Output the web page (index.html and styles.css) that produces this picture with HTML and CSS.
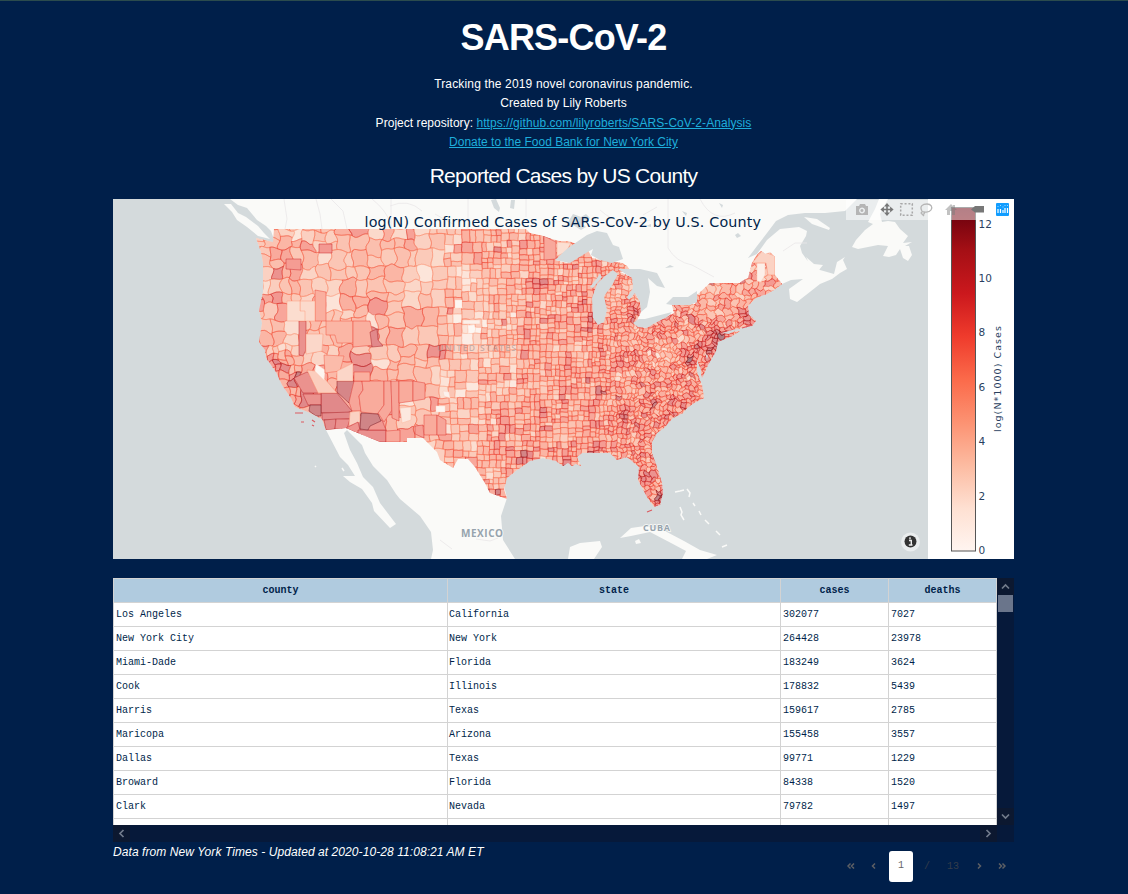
FILE: index.html
```html
<!DOCTYPE html>
<html lang="en">
<head>
<meta charset="utf-8">
<title>SARS-CoV-2</title>
<link rel="stylesheet" href="styles.css">
</head>
<body>
<main class="page">
  <header class="intro">
    <h1>SARS-CoV-2</h1>
    <p class="tagline">Tracking the 2019 novel coronavirus pandemic.</p>
    <p class="author">Created by Lily Roberts</p>
    <p class="repo">Project repository: <a href="#">https://github.com/lilyroberts/SARS-CoV-2-Analysis</a></p>
    <p class="donate"><a href="#">Donate to the Food Bank for New York City</a></p>
    <h2>Reported Cases by US County</h2>
  </header>

  <section class="chart">
    <svg class="map" width="901" height="360" viewBox="113 199 901 360">
      <defs>
        <clipPath id="mapArea"><rect x="113" y="199" width="815" height="360"/></clipPath>
        <path id="outline" d="M274 229H526L530 233 543 236 552 239 559 241 568 241 577 244 566 254 555 260 567 263 588 250 592 258 612 262 622 263 627 266 630 270 620 272 633 278 634 288 628 298 635 293 640 302 641 312 636 322 645 328 660 320 674 313 672 305 695 304 697 295 710 283H740L742 281 748 278 752 263 756 256 761 251 765 254 770 252 775 257V275L782 284 774 290 767 294 756 298 748 306 749 315 756 321 752 326 742 328 725 333 740 331 732 336 718 342 716 351 708 365 702 378 700 370 697 360 697 372 702 385 704 398 694 403 687 408 683 413 673 418 664 428 657 433 652 442V453L657 467 662 483 663 493 660 505 654 507 647 497 638 480 639 467 627 457 617 460 610 453H582L577 457 581 466 576 464 572 466 568 463 563 466 556 461 543 458 530 461 517 470 507 478 504 489 507 499 490 493 485 483 475 467 468 459H458L453 468 440 460 437 452 423 438H407V442H380L346 428 326 430 322 419 308 412 295 407 291 398 282 385 276 372 266 358 265 350 259 342 262 323 259 310 263 292 263 263 261 252 256 238 273 242Z"/>
        <clipPath id="us"><use href="#outline"/></clipPath>
        <linearGradient id="reds" x1="0" y1="1" x2="0" y2="0">
          <stop offset="0" stop-color="#fff5f0"/><stop offset=".125" stop-color="#fee0d2"/><stop offset=".25" stop-color="#fcbba1"/><stop offset=".375" stop-color="#fc9272"/><stop offset=".5" stop-color="#fb6a4a"/><stop offset=".625" stop-color="#ef3b2c"/><stop offset=".75" stop-color="#cb181d"/><stop offset=".875" stop-color="#a50f15"/><stop offset="1" stop-color="#67000d"/>
        </linearGradient>
      </defs>
      <g clip-path="url(#mapArea)">
        <rect class="sea" x="113" y="199" width="815" height="360"/>
        <g class="land">
          <use href="#outline"/>
          <path d="M230 199L238 205 247 208 257 220 266 226 271 231 276 245 400 330 640 330 740 290 782 284 791 280 803 279 789 289 790 299 797 302 806 295 820 284 832 279 840 273 847 269 843 260 845 257 837 262 834 274 820 270 807 260 802 253 800 246 806 236 807 231 799 227 780 229 767 240 757 254 748 258 757 246 767 233 776 221 788 215 805 213 825 213 845 211 857 199Z"/>
          <path d="M224 204L231 204 238 213 246 217 258 226 264 233 270 239 258 236 247 227 237 220 232 212Z"/>
          <path d="M873 224L865 230 856 240 852 247 858 249 878 245 888 246 883 256 889 257 896 255 900 249 903 258 908 261 912 255 909 246 905 246 912 242 903 243 908 236 900 229 895 222 888 221 882 222 880 214 888 199H879L875 209 868 222Z"/>
          <path d="M804 217L817 219 830 228 829 230 812 224Z"/>
          <path d="M806 257l8 7 9 1-4 5-8-3z"/>
          <path d="M326 430L340 457 348 465 355 476 343 476 350 482 362 489 372 503 374 511 390 528 396 524 380 503 373 487 363 477 357 463 350 450 344 433 347 430 362 445 365 453 373 466 387 480 396 494 400 499 420 516 431 532 433 550 431 559H515L503 540 501 516 507 498 500 470 440 420 360 420Z"/>
          <path d="M568 559L570 547 580 543 600 541 602 547 594 559ZM620 538L631 528 645 526 665 531 684 541 700 550 717 555 707 559H682L686 551 671 543 650 532 631 536ZM635 541l4-2 2 4-5 1z"/>
          <path class="islands" d="M675 492l5-1 4-1M687 489l3 4-1 4M680 507l2 5-1 3 3 5M693 503l2 3M699 511l2 4M705 520l4 4M716 531l4 4M722 547l5-2M315 466l1 1M342 468l2 3"/>
        </g>
        <g class="rivers"><path d="M284 199l3 20-2 10M316 199l4 15 2 15M331 199l12 12 4 18M391 199v30M468 199v30M526 199v18M668 199v49q8 14 24 17l22 12M372 199q15 12 18 24M600 210q22 20 50 10M700 199q13 25 35 14M435 214l18 10M390 206q18-8 32 5M643 215l14-8M783 251l12-8 12 0M476 539l14 2 8-3M440 540l12 9"/></g>
        <g class="water"><path d="M491 200l5-1 4 9-1 4-5-4zM511 200h4l-1 9-4-1zM573 214l8 3 5-3 4 4-7 6 3 3-5 3-8-5-6 2 1-5zM735 235l3-2 3 3-4 2zM656 242l4 2M625 205l5 1M719 203l3 5 1-3zM682 211l4 5 1-3zM646 226l5-2v3z"/></g>
        <g id="counties" clip-path="url(#us)"></g>
        <g clip-path="url(#us)"><g id="named"></g></g>
        <g class="channel-isles"><path d="M295 413h8M301 422h3M312 420l3 2M312 425l2 1M654 506l4-1M647 512l5-2M742 328l10-3"/></g>
        <g class="water">
          <path d="M555 260L568 248 587 235 597 231 607 233 613 245 619 247 623 259 612 263 600 260 591 255 593 249 586 253 570 263ZM613 270L605 276 597 284 592 298 593 318 598 325 604 322 607 310 604 296 611 287 618 274ZM618 269L640 269 657 273 665 288 657 286 648 278 650 292 647 307 641 312 640 302 635 293 629 300 627 297 633 288 632 278ZM633 323L639 319 645 319 672 312 667 317 655 323 647 328 638 327ZM666 304L673 297 688 297 697 291 697 302 690 305 672 305Z"/>
          <path d="M697 360l4 10v12l-4-15zM722 333l17-5-10 6zM665 268l5-3 4 2M705 353l3 3-1 3zM590 287l10-13 2 3-9 11z"/>
        </g>
        <g class="map-labels">
          <text class="faint" x="437" y="351" textLength="79" lengthAdjust="spacing">UNITED STATES</text>
          <text class="mx" x="461" y="537" textLength="42">MEXICO</text>
          <text class="cu" x="643" y="531" textLength="27">CUBA</text>
        </g>
        <circle cx="910.5" cy="542" r="9.5" fill="#fff" fill-opacity=".5"/>
        <circle cx="910.5" cy="541.5" r="6" fill="#333"/>
        <path d="M909 540.5h2.3v4M908.800 545h3.700M910 537.300v2" fill="none" stroke="#eee" stroke-width="1.4"/>
      </g>
      <text class="chart-title" x="364.500" y="227" textLength="396.500">log(N) Confirmed Cases of SARS-CoV-2 by U.S. County</text>
      <rect x="951.5" y="207.500" width="24" height="343.500" fill="url(#reds)" stroke="#555"/>
      <g class="ticks">
        <text x="978.500" y="554">0</text><text x="978.500" y="500">2</text><text x="978.500" y="445">4</text><text x="978.500" y="391">6</text><text x="978.500" y="336">8</text><text x="978.500" y="282">10</text><text x="978.500" y="227.500">12</text>
        <text class="bar-title" transform="translate(1001 432) rotate(-90)" textLength="106">log(N*1000) Cases</text>
      </g>
      <rect x="846" y="200" width="168" height="20" fill="#fff" fill-opacity=".5"/>
      <g class="tools">
        <path fill-rule="evenodd" d="M856 206h3l1-2h5l1 2h2v9h-12zM862 207.500a3 3 0 1 0 .1 0zM862 209a1.500 1.500 0 1 1-.1 0z"/>
        <path class="active" d="M887 203l3 3.500h-2.200v2.300h2.300v-2.300l3.500 3-3.500 3v-2.200h-2.300v2.300h2.200l-3 3.500-3-3.500h2.200v-2.300h-2.300v2.200l-3.500-3 3.500-3v2.300h2.300v-2.300h-2.200z"/>
        <rect x="900.700" y="203.700" width="11.600" height="11.600" fill="none" stroke="#a8a8a8" stroke-width="1.500" stroke-dasharray="2 1.860"/>
        <path d="M922 211c-3-5 1-7 5-7s6 3 4 6-5 2-7 2c-2-1-4 1-2 2s3-1 2-2M922 214l2 2" fill="none" stroke="#b5b5b5" stroke-width="1.300"/>
        <path class="home" d="M945 210l6-6 2 2v-1h2v3l2 2h-2v5h-3v-4h-2v4h-3v-5z"/>
        <path class="tag" d="M971 209.500l4-3.500h9v6.500h-9z"/>
        <rect x="996" y="203" width="13" height="13" rx="1" fill="#119dff"/>
        <path d="M998 209v4M1000.500 209v4M1003 210v3M1005 208v5M1007.500 208v5" stroke="#fff" stroke-width="1.200"/>
        <path d="M997.500 206.500h1M1000 205.500h1M1002.500 207h1M1004.500 205.500h1M1007 205.500h1" stroke="#fff" stroke-opacity=".6"/>
      </g>
    </svg>
  </section>

  <section class="table-box">
    <div class="table-view">
      <div class="row head"><span>county</span><span>state</span><span>cases</span><span>deaths</span></div>
      <div class="row"><span>Los Angeles</span><span>California</span><span>302077</span><span>7027</span></div>
      <div class="row"><span>New York City</span><span>New York</span><span>264428</span><span>23978</span></div>
      <div class="row"><span>Miami-Dade</span><span>Florida</span><span>183249</span><span>3624</span></div>
      <div class="row"><span>Cook</span><span>Illinois</span><span>178832</span><span>5439</span></div>
      <div class="row"><span>Harris</span><span>Texas</span><span>159617</span><span>2785</span></div>
      <div class="row"><span>Maricopa</span><span>Arizona</span><span>155458</span><span>3557</span></div>
      <div class="row"><span>Dallas</span><span>Texas</span><span>99771</span><span>1229</span></div>
      <div class="row"><span>Broward</span><span>Florida</span><span>84338</span><span>1520</span></div>
      <div class="row"><span>Clark</span><span>Nevada</span><span>79782</span><span>1497</span></div>
      <div class="row"><span></span><span></span><span></span><span></span></div>
    </div>
    <div class="vbar">
      <svg width="17" height="17"><path d="M5 10.500l3.500-3.500 3.500 3.500"/></svg>
      <div class="thumb"></div>
      <svg class="end" width="17" height="17"><path d="M5 6.500l3.500 3.500 3.500-3.500"/></svg>
    </div>
    <div class="hbar">
      <svg width="17" height="17"><path d="M10.500 5l-3.500 3.500 3.500 3.500"/></svg>
      <svg width="17" height="17"><path d="M6.500 5l3.500 3.500-3.500 3.500"/></svg>
    </div>
    <div class="corner"></div>
  </section>

  <footer class="foot">
    <em>Data from New York Times - Updated at 2020-10-28 11:08:21 AM ET</em>
    <nav class="pager">
      <svg width="8" height="8"><path d="M3.500 1.500l-2.500 2.500 2.500 2.500M7 1.500l-2.500 2.500 2.500 2.500"/></svg>
      <svg class="prev" width="5" height="8"><path d="M4 1.500l-2.500 2.500 2.500 2.500"/></svg>
      <span class="current">1</span>
      <span class="slash">/</span>
      <span class="total">13</span>
      <svg class="next" width="5" height="8"><path d="M1 1.500l2.500 2.500-2.500 2.500"/></svg>
      <svg width="8" height="8"><path d="M1 1.500l2.500 2.500-2.500 2.500M4.500 1.500l2.500 2.500-2.500 2.500"/></svg>
    </nav>
  </footer>
</main>
<script src="map.js"></script>
</body>
</html>
```
FILE: styles.css
```css
* { box-sizing: border-box; }
body { margin: 0; background: #001f4a; color: #fff; font: 12px/19.3px "Liberation Sans", Arial, sans-serif; border-top: 1px solid #2b4b4d; height: 894px; overflow: hidden; }
.page { width: 901px; margin-left: 113px; }
.intro { height: 198px; text-align: center; }
h1 { margin: 0; padding-top: 14px; height: 74px; font-size: 36px; line-height: 46px; letter-spacing: -.8px; }
p { margin: 0; height: 19.4px; }
.tagline { letter-spacing: .155px; }
.author { letter-spacing: .05px; }
.repo { letter-spacing: .04px; }
.repo a { letter-spacing: .07px; }
a { color: #1eaedb; }
h2 { margin: 0; padding-top: 10px; font-size: 21px; line-height: 26px; font-weight: 400; letter-spacing: -.72px; }
.chart { height: 360px; background: #fff; }
.map { display: block; }
.sea, .water { fill: #d4dadc; }
.land { fill: #fafaf8; }
.land .islands { fill: none; stroke: #fafaf8; stroke-width: 1.5; }
.rivers { fill: none; stroke: #eae7e8; stroke-width: .8; }
.channel-isles { fill: none; stroke: #dc5a60; stroke-width: 1.2; }
.map-labels { font: bold 10px "Open Sans", sans-serif; fill: #96a3ad; stroke: #fafaf8; stroke-width: 1.5px; paint-order: stroke; }
.map-labels .faint { font-size: 8.5px; font-weight: 600; fill: #9b8d8d; fill-opacity: .55; stroke: none; }
.map-labels .cu { font-size: 9px; }
.chart-title { font: 14.3px "DejaVu Sans", sans-serif; fill: #001f4a; font-variant-ligatures: none; }
.ticks { font: 10.5px "DejaVu Sans", sans-serif; fill: #2a3f5f; }
.ticks .bar-title { font-size: 9.5px; }
.tools { fill: #b5b5b5; }
.tools .active { fill: #777; }
.tools .home { fill: #777; fill-opacity: .45; }
.tools .tag { fill: #777; }
.table-box { margin-top: 19px; display: grid; grid-template-columns: 884px 17px; grid-template-rows: 247px 17px; font-family: "Liberation Mono", "Courier New", monospace; font-size: 10px; }
.table-view { overflow: hidden; background: #fff; color: #001f4a; }
.row { display: grid; grid-template-columns: 334px 333px 108px 109px; height: 24px; }
.row span { border-top: 1px solid #d3d3d3; border-left: 1px solid #d3d3d3; padding-left: 2px; line-height: 23px; }
.row span:nth-child(2) { padding-left: 1px; }
.row span:last-child { border-right: 1px solid #d3d3d3; }
.row.head span { background: #b0cbdf; text-align: center; font-weight: bold; padding: 0; }
.vbar { display: flex; flex-direction: column; background: #06193a; }
.vbar .end { margin-top: auto; }
.thumb { width: 15px; height: 17px; margin-left: 1px; background: #6a758b; }
.hbar { display: flex; justify-content: space-between; background: #06193a; }
.corner { background: #06193a; }
.vbar svg, .hbar svg { fill: none; stroke: #727b8b; stroke-width: 1.7; background: #0c1830; }
.foot { display: flex; justify-content: space-between; }
.foot em { padding-top: 1px; letter-spacing: .075px; }
.pager { display: flex; align-items: center; height: 32px; margin: 8px 8px 0 0; font: 10px "Liberation Mono", monospace; color: #343d4b; }
.pager svg { fill: none; stroke: #5d6065; stroke-width: 1.5; }
.prev { margin-left: 16px; }
.current { width: 24px; height: 31px; margin-left: 13px; border-radius: 3px; background: #fff; color: #666; line-height: 30px; text-align: center; }
.slash { margin-left: 11px; }
.total { margin-left: 17px; }
.next { margin: 0 16px 0 18px; }
```
FILE: map.js
```javascript
const NS = "http://www.w3.org/2000/svg";
const REDS = ["fff5f0", "fee0d2", "fcbba1", "fc9272", "fb6a4a", "ef3b2c", "cb181d", "a50f15", "67000d"]
  .map(h => [0, 2, 4].map(i => parseInt(h.substr(i, 2), 16)));

// Colour for a value between 0 and 12.
function red(v) {
  const t = Math.max(0, Math.min(7.999, v / 12.6 * 8)), i = Math.floor(t), f = t - i;
  return "rgb(" + REDS[i].map((c, k) => Math.round(c + (REDS[i + 1][k] - c) * f)).join() + ")";
}

let seed = 77;
function rnd() {
  seed = (seed * 1664525 + 1013904223) % 4294967296;
  return seed / 4294967296;
}

function cellSize(x, y) {
  if (x < 300) return y > 345 ? 8 : 13;
  if (x < 400) return y > 370 ? 18 : 15;
  if (x < 440) return 15;
  if (x < 480) return 10;
  if (x < 530) return y > 440 ? 7 : 7.6;
  if (x < 600) return 6.3;
  return y < 320 && x > 690 ? 7.5 : 5.3;
}

// Split the map into rectangles until each is about one county in size.
const cells = [];
function split(x, y, w, h) {
  const s = cellSize(x + w / 2, y + h / 2);
  if (w <= s * 1.3 && h <= s * 1.3) {
    cells.push([x, y, w, h]);
    return;
  }
  const k = .36 + rnd() * .28;
  if (w > h) { split(x, y, w * k, h); split(x + w * k, y, w * (1 - k), h); }
  else { split(x, y, w, h * k); split(x, y + h * k, w, h * (1 - k)); }
}
split(235, 210, 305, 310);
split(540, 210, 260, 310);

// Borders wander in the mountains and the east, and stay straight on the plains.
function warp([x, y]) {
  const west = Math.max(0, Math.min(1, (455 - x) / 40)), east = Math.max(0, Math.min(1, (x - 590) / 60));
  const a = .2 + west * 1.05 + east * .9, k = west ? .19 : .42;
  return [
    x + a * (Math.sin(y * k + x * .07) + .8 * Math.sin(y * k * 2.3 + x * .19 + 2) + .5 * Math.sin(x * .31 + 1)),
    y + a * (Math.sin(x * k + y * .09 + 1) + .8 * Math.sin(x * k * 2.1 - y * .17) + .5 * Math.sin(y * .37))
  ];
}

const HOT = [[288, 249, 9, 3], [291, 253, 6, 2], [277, 276, 7, 2], [275, 283, 5, 2], [280, 368, 13, 3.2], [297, 381, 12, 3], [375, 336, 6, 4],
  [302, 267, 9, 2], [437, 350, 8, 3.5], [592, 324, 8, 4], [541, 284, 5, 4], [634, 314, 7, 3], [569, 359, 4, 3], [719, 336, 9, 4.5],
  [745, 318, 9, 3.5], [691, 357, 9, 3.5], [707, 348, 11, 3], [526, 458, 6, 4], [508, 424, 6, 4], [502, 447, 7, 2.5], [661, 498, 8, 4],
  [648, 477, 10, 2.5], [624, 415, 5, 4], [571, 458, 7, 2.5], [498, 494, 7, 3], [603, 391, 5, 3], [667, 318, 9, 1.5],
  [648, 400, 9, 1.2], [665, 415, 20, .8], [594, 450, 12, 1.5], [355, 378, 22, 1.8], [370, 423, 28, 3], [310, 399, 17, 3],
  [619, 360, 7, 2], [625, 351, 5, 2], [588, 308, 12, 1.6], [660, 326, 12, 1], [477, 253, 9, 2], [680, 393, 18, .6]];
const COLD = [[320, 300, 15, 1.5], [460, 330, 14, 1.8], [480, 322, 14, 1.8], [465, 401, 18, 1.4], [448, 382, 15, 1.4], [429, 250, 12, 1.3],
  [460, 288, 18, 1.1], [760, 270, 13, 1], [666, 355, 12, 1.7], [475, 430, 16, 1.2], [640, 286, 15, .9], [331, 345, 11, 1.4],
  [505, 488, 5, 2], [407, 413, 10, 2], [450, 260, 20, .7], [675, 295, 15, 1]];

function value(x, y) {
  let v = x > 590 ? 5.7 : x > 520 ? 5.5 : 4.9;
  if (y > 400) v += .3;
  for (const [a, b, r, k] of HOT) v += k * Math.exp(-((x - a) ** 2 + (y - b) ** 2) / (r * r));
  for (const [a, b, r, k] of COLD) v -= k * Math.exp(-((x - a) ** 2 + (y - b) ** 2) / (r * r));
  v += (rnd() + rnd() + rnd() - 1.5) * 2.3;
  if (rnd() > .94) v += 2;
  return v;
}

function shape(parent, pts, v) {
  const p = document.createElementNS(NS, "path");
  p.setAttribute("d", "M" + pts.map(q => q[0].toFixed(1) + " " + q[1].toFixed(1)).join("L") + "Z");
  p.setAttribute("fill", red(v));
  p.setAttribute("fill-opacity", .5);
  p.setAttribute("stroke", red(v + 1.5));
  p.setAttribute("stroke-opacity", .5);
  p.setAttribute("stroke-width", .9);
  parent.appendChild(p);
}

// Walk round each rectangle in short steps so that the warp bends its sides.
const layer = document.getElementById("counties");
for (const [x, y, w, h] of cells) {
  const corners = [[x, y], [x + w, y], [x + w, y + h], [x, y + h]], pts = [];
  corners.forEach((p, i) => {
    const q = corners[(i + 1) % 4];
    const n = Math.max(2, Math.ceil(Math.hypot(q[0] - p[0], q[1] - p[1]) / 2.5));
    for (let k = 0; k < n; k++) pts.push(warp([p[0] + (q[0] - p[0]) * k / n, p[1] + (q[1] - p[1]) * k / n]));
  });
  shape(layer, pts, value(x + w / 2, y + h / 2));
}

// Large counties of the west: value, then x/y pairs.
const LARGE = [
  [9.6, 321, 393, 337, 393, 352, 411, 347, 413, 321, 413],
  [10.5, 337, 381, 354, 381, 353, 390, 349, 403, 337, 392],
  [8.7, 303, 394, 321, 394, 321, 405, 308, 405],
  [11, 310, 405, 321, 405, 321, 416, 316, 416, 309, 411],
  [9.4, 322, 413, 352, 412, 350, 419, 322, 420],
  [9.3, 324, 420, 336, 419, 335, 429, 326, 430],
  [8.8, 336, 419, 350, 419, 347, 429, 335, 429],
  [7.2, 354, 381, 362, 381, 363, 390, 359, 396, 361, 411, 352, 411, 349, 402],
  [6.8, 362, 381, 384, 381, 384, 405, 378, 414, 361, 412, 359, 396, 363, 390],
  [3.8, 350, 412, 360, 411, 360, 422, 349, 426],
  [8.3, 346, 428, 358, 422, 360, 430, 357, 433],
  [8.8, 358, 430, 386, 430, 386, 442, 380, 442, 358, 434],
  [8.2, 366, 422, 382, 420, 386, 430, 368, 430],
  [11, 361, 413, 378, 414, 381, 421, 370, 426, 368, 430, 360, 429],
  [7, 384, 381, 391, 381, 392, 410, 384, 422, 378, 413, 384, 405],
  [7.2, 391, 381, 399, 381, 399, 421, 392, 418],
  [8.7, 294, 378, 307, 372, 313, 376, 318, 393, 303, 393],
  [4.2, 307, 370, 316, 371, 325, 379, 337, 393, 318, 393],
  [.4, 316, 364, 325, 370, 324, 380, 315, 371],
  [8.7, 299, 321, 306, 321, 306, 350, 303, 356, 299, 355],
  [6, 326, 321, 353, 321, 353, 343, 337, 343, 335, 335, 326, 335],
  [6.5, 315, 290, 326, 292, 326, 321, 315, 321],
  [3.2, 300, 301, 315, 301, 315, 321, 300, 321],
  [3, 287, 301, 300, 301, 300, 311, 305, 311, 305, 321, 287, 321],
  [3.4, 306, 334, 323, 334, 322, 351, 306, 354],
  [5.6, 324, 355, 344, 356, 340, 371, 325, 373],
  [3.5, 337, 371, 353, 363, 353, 381, 337, 381],
  [6.5, 354, 372, 370, 372, 370, 381, 354, 381],
  [6.5, 353, 321, 370, 321, 375, 345, 353, 347],
  [9.5, 370, 332, 377, 329, 378, 340, 383, 346, 372, 347],
  [7.8, 286, 259, 301, 259, 301, 270, 286, 269],
  [8, 319, 244, 332, 244, 332, 253, 319, 253],
  [6.8, 399, 381, 413, 381, 413, 401, 399, 403],
  [7, 386, 431, 400, 430, 400, 442, 386, 442],
  [7, 413, 381, 425, 383, 425, 399, 413, 401],
  [2, 400, 408, 411, 407, 411, 420, 402, 423],
  [6.8, 424, 415, 437, 415, 437, 435, 424, 435],
  [7.2, 437, 415, 446, 420, 446, 435, 437, 435],
  [7.6, 415, 426, 423, 425, 424, 438, 415, 434],
  [7, 544, 236, 556, 242, 556, 259, 544, 260],
  [2.8, 557, 242, 571, 243, 566, 252, 557, 256],
  [.2, 455, 300, 462, 300, 462, 308, 455, 308],
  [.3, 436, 406, 445, 406, 445, 412, 436, 412],
  [.8, 443, 391, 449, 392, 450, 398, 444, 396],
  [1.2, 463, 320, 480, 320, 480, 324, 463, 324],
  [1.3, 757, 263, 765, 263, 765, 275, 761, 282, 757, 281],
  [3.8, 752, 263, 762, 251, 775, 256, 775, 275, 768, 275, 766, 263]
];
const named = document.getElementById("named");
for (const [v, ...c] of LARGE) {
  const pts = [];
  for (let i = 0; i < c.length; i += 2) pts.push([c[i], c[i + 1]]);
  const base = document.createElementNS(NS, "polygon");
  base.setAttribute("points", pts.join(" "));
  base.setAttribute("fill", "#fafaf8");
  named.appendChild(base);
  shape(named, pts, v);
}
```
